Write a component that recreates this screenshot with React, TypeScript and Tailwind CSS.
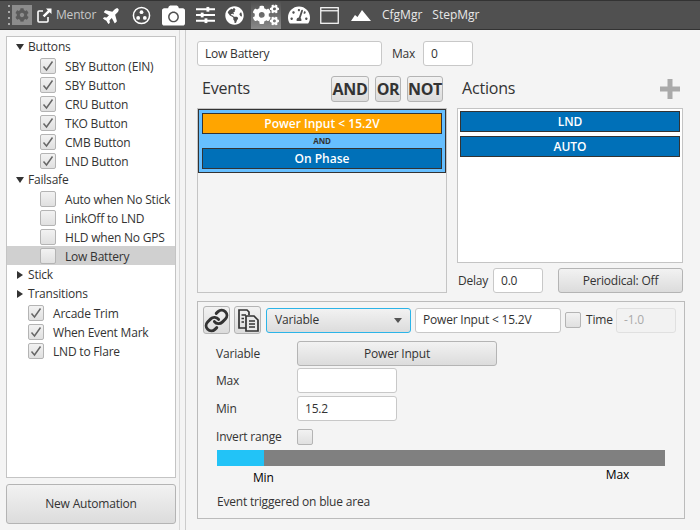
import React from "react";
import { FaCamera, FaCogs, FaGlobeAmericas, FaPlane, FaTachometerAlt, FaCog } from "react-icons/fa";
import { Link } from "lucide-react";

const btn = "border border-[#b4b4b4] rounded-[3px] bg-linear-to-b from-[#f2f2f2] to-[#dcdcdc] text-[#333]";
const input = "border border-[#c8c8c8] rounded-[3px] bg-white flex items-center px-[7px] text-[#333]";

function Check({ on = true }: { on?: boolean }) {
  return (
    <div className="w-[16px] h-[16px] shrink-0 border border-[#b4b4b4] rounded-[2px] bg-linear-to-b from-[#f2f2f2] to-[#e0e0e0] flex items-center justify-center">
      {on && (
        <svg width="12" height="12" viewBox="0 0 12 12">
          <path d="M1.5 6.5 L4.5 10 L10.5 1.5" fill="none" stroke="#666" strokeWidth="1.5" />
        </svg>
      )}
    </div>
  );
}

function Group({ label, open }: { label: string; open: boolean }) {
  return (
    <div className="h-[19px] flex items-center pl-[9px]">
      <svg width="8" height="8" viewBox="0 0 8 8" className="mr-[4px] shrink-0">
        {open ? <path d="M0 1 H8 L4 7 Z" fill="#333" /> : <path d="M1 0 V8 L7 4 Z" fill="#333" />}
      </svg>
      <span>{label}</span>
    </div>
  );
}

function Item({ label, on, deep = true, sel = false }: { label: string; on: boolean; deep?: boolean; sel?: boolean }) {
  return (
    <div className={`h-[19px] flex items-center ${deep ? "pl-[33px]" : "pl-[21px]"} ${sel ? "bg-[#d0d0d0]" : ""}`}>
      <Check on={on} />
      <span className="ml-[9px] pt-[2px] whitespace-nowrap">{label}</span>
    </div>
  );
}

function Toolbar() {
  return (
    <div className="h-[30px] shrink-0 bg-[#505050] border-y border-y-[#333] flex items-center relative text-[12px]">
      <div className="ml-[7px] w-[3px] h-[20px] flex flex-col justify-between items-center">
        {[0, 1, 2, 3].map((i) => (
          <div key={i} className="w-[2px] h-[2px] bg-[#aaa]" />
        ))}
      </div>
      <div className="ml-[2px] w-[20px] h-[20px] bg-[#8c8c8c] flex items-center justify-center">
        <FaCog size={14} color="#5a5a5a" />
      </div>
      <svg width="15" height="15" viewBox="0 0 15 15" className="ml-[5px]">
        <path d="M6 3 H2 a1 1 0 0 0 -1 1 V13 a1 1 0 0 0 1 1 H10 a1 1 0 0 0 1 -1 V9" fill="none" stroke="#fff" strokeWidth="1.6" />
        <path d="M9 0.5 H14.5 V6 L12.6 4.2 L7.5 9.3 L5.7 7.5 L10.8 2.4 Z" fill="#fff" />
      </svg>
      <span className="ml-[4px] text-[#c8c8c8] w-[43px]">Mentor</span>
      <FaPlane size={18} color="#fff" className="ml-[4px] -rotate-45" />
      <svg width="19" height="19" viewBox="0 0 20 20" className="ml-[11px]">
        <circle cx="10" cy="10" r="8.5" fill="none" stroke="#fff" strokeWidth="1.6" />
        <circle cx="10" cy="6.5" r="2" fill="#fff" />
        <circle cx="6.5" cy="12.5" r="2" fill="#fff" />
        <circle cx="13.5" cy="12.5" r="2" fill="#fff" />
      </svg>
      <FaCamera size={23} color="#fff" className="ml-[11px]" />
      <svg width="19" height="18" viewBox="0 0 20 18" className="ml-[11px]">
        <path d="M0 3 H20 M0 9 H20 M0 15 H20" stroke="#fff" strokeWidth="2" />
        <rect x="11" y="0.5" width="3" height="5" fill="#fff" />
        <rect x="5" y="6.5" width="3" height="5" fill="#fff" />
        <rect x="9" y="12.5" width="3" height="5" fill="#fff" />
      </svg>
      <FaGlobeAmericas size={19} color="#fff" className="ml-[10px]" />
      <div className="ml-[7px] w-[30px] h-[28px] bg-linear-to-b from-[#505050] to-[#8a8a8a] flex items-center justify-center">
        <FaCogs size={26} color="#fff" />
      </div>
      <FaTachometerAlt size={22} color="#fff" className="ml-[7px]" />
      <svg width="19" height="17" viewBox="0 0 20 18" className="ml-[10px]">
        <rect x="0.75" y="0.75" width="18.5" height="16.5" fill="none" stroke="#fff" strokeWidth="1.3" />
        <path d="M1 4 H19" stroke="#fff" strokeWidth="1.3" />
      </svg>
      <svg width="20" height="11" viewBox="0 0 20 11" className="ml-[12px]">
        <path d="M0 11 L4 5 L6.5 7 L11 0 L20 11 Z" fill="#fff" />
      </svg>
      <span className="ml-[11px] text-[#e8e8e8] tracking-normal">CfgMgr</span>
      <span className="ml-[10px] text-[#e8e8e8] tracking-normal">StepMgr</span>
    </div>
  );
}

function Sidebar() {
  return (
    <div className="w-[186px] shrink-0 flex flex-col pl-[6px] pr-[9px] pt-[6px] pb-[6px] border-r border-r-[#ccc] relative">
      <div className="absolute right-[5px] top-0 bottom-0 w-px bg-[#d8d8d8]" />
      <div className="flex-1 bg-white border border-[#c4c4c4] overflow-hidden">
        <Group label="Buttons" open />
        <Item label="SBY Button (EIN)" on />
        <Item label="SBY Button" on />
        <Item label="CRU Button" on />
        <Item label="TKO Button" on />
        <Item label="CMB Button" on />
        <Item label="LND Button" on />
        <Group label="Failsafe" open />
        <Item label="Auto when No Stick" on={false} />
        <Item label="LinkOff to LND" on={false} />
        <Item label="HLD when No GPS" on={false} />
        <Item label="Low Battery" on={false} sel />
        <Group label="Stick" open={false} />
        <Group label="Transitions" open={false} />
        <Item label="Arcade Trim" on deep={false} />
        <Item label="When Event Mark" on deep={false} />
        <Item label="LND to Flare" on deep={false} />
      </div>
      <div className={`${btn} h-[40px] mt-[6px] flex items-center justify-center`}>New Automation</div>
    </div>
  );
}

function Bar({ label, bg }: { label: string; bg: string }) {
  return (
    <div className={`h-[21px] border border-[#333] ${bg} flex items-center justify-center text-white font-semibold tracking-normal`}>{label}</div>
  );
}

function Field({ label, children, top = "" }: { label: string; children: React.ReactNode; top?: string }) {
  return (
    <div className={`flex items-center h-[25px] ${top}`}>
      <span className="w-[81px]">{label}</span>
      {children}
    </div>
  );
}

function Logic({ t, w }: { t: string; w: string }) {
  return <div className={`${btn} ${w} h-[26px] flex items-center justify-center text-[16px] font-bold tracking-[-0.3px]`}>{t}</div>;
}

function Main() {
  return (
    <div className="flex-1 min-w-0 pl-[11px] pr-[15px] pt-[11px]">
      <div className="flex items-center h-[25px]">
        <div className={`${input} w-[185px] h-[25px]`}>Low Battery</div>
        <span className="ml-[10px] w-[31px]">Max</span>
        <div className={`${input} w-[50px] h-[25px]`}>0</div>
      </div>
      <div className="flex mt-[10px]">
        <div className="w-[250px] shrink-0">
          <div className="flex items-center h-[26px] pl-[5px]">
            <span className="text-[16px] flex-1 -mt-[2px]">Events</span>
            <Logic t="AND" w="w-[38px]" />
            <Logic t="OR" w="w-[26px] ml-[6px]" />
            <Logic t="NOT" w="w-[36px] ml-[6px] mr-[4px]" />
          </div>
          <div className="mt-[6px] h-[185px] border border-[#c4c4c4] bg-[#f4f4f4]">
            <div className="border border-[#333] bg-[#66bfff] h-[64px] px-[3px] py-[3px] flex flex-col">
              <Bar label="Power Input < 15.2V" bg="bg-[#ffa500]" />
              <div className="h-[14px] flex items-center justify-center text-[8px] font-bold text-[#333]">AND</div>
              <Bar label="On Phase" bg="bg-[#0070b8]" />
            </div>
          </div>
        </div>
        <div className="w-[226px] shrink-0 ml-[10px]">
          <div className="flex items-center justify-between h-[26px] pl-[5px] pr-[3px]">
            <span className="text-[16px] -mt-[2px]">Actions</span>
            <svg width="20" height="20" viewBox="0 0 20 20">
              <path d="M7.5 0 H12.5 V7.5 H20 V12.5 H12.5 V20 H7.5 V12.5 H0 V7.5 H7.5 Z" fill="#aaa" />
            </svg>
          </div>
          <div className="mt-[6px] h-[155px] border border-[#c4c4c4] bg-white px-[2px] pt-[2px] flex flex-col gap-[4px]">
            <Bar label="LND" bg="bg-[#0070b8] border-[#0070b8]" />
            <Bar label="AUTO" bg="bg-[#0070b8] border-[#0070b8]" />
          </div>
          <div className="flex items-center h-[25px] mt-[5px] pl-[1px]">
            <span className="w-[35px]">Delay</span>
            <div className={`${input} w-[50px] h-[25px]`}>0.0</div>
            <div className={`${btn} w-[125px] h-[25px] ml-[15px] flex items-center justify-center`}>Periodical: Off</div>
          </div>
        </div>
      </div>
      <div className="mt-[8px] w-[488px] h-[218px] border border-[#bbb] flex flex-col px-[5px] pt-[4px]">
        <div className="flex items-center h-[28px]">
          <div className={`${btn} w-[27px] h-[28px] flex items-center justify-center`}>
            <Link size={25} color="#333" strokeWidth={2.8} />
          </div>
          <div className={`${btn} w-[27px] h-[28px] ml-[4px] flex items-center justify-center`}>
            <svg width="24" height="24" viewBox="0 0 24 24" fill="none" stroke="#333" strokeWidth="1.7">
              <path d="M10 20 H3 V2 H11 L13 4 V7" />
              <path d="M5.5 7 H10 M5.5 10.5 H8 M5.5 14 H8" />
              <path d="M10 8 H18 L22 12 V23 H10 Z" fill="#e8e8e8" />
              <path d="M13 13 H19 M13 16 H19 M13 19 H19" />
            </svg>
          </div>
          <div className={`${btn} w-[145px] h-[25px] ml-[5px] !border-[#2bb4e8] !border-[1.5px] flex items-center justify-between pl-[8px] pr-[8px]`}>
            <span>Variable</span>
            <svg width="8" height="5" viewBox="0 0 8 5"><path d="M0 0 H8 L4 5 Z" fill="#555" /></svg>
          </div>
          <div className={`${input} w-[146px] h-[25px] ml-[4px]`}>Power Input &lt; 15.2V</div>
          <div className="ml-[4px]"><Check on={false} /></div>
          <span className="ml-[5px] w-[30px]">Time</span>
          <div className={`${input} w-[60px] h-[25px] !bg-[#f2f2f2] !text-[#aaa] !border-[#e0e0e0]`}>-1.0</div>
        </div>
        <div className="pl-[13px] mt-[7px]">
          <Field label="Variable">
            <div className={`${btn} w-[200px] h-[25px] flex items-center justify-center`}>Power Input</div>
          </Field>
          <Field label="Max" top="mt-[2px]">
            <div className={`${input} w-[100px] h-[25px]`} />
          </Field>
          <Field label="Min" top="mt-[3px]">
            <div className={`${input} w-[100px] h-[25px]`}>15.2</div>
          </Field>
          <div className="flex items-center h-[16px] mt-[8px]">
            <span className="w-[81px]">Invert range</span>
            <Check on={false} />
          </div>
          <div className="mt-[5px] w-[448px] h-[16px] bg-[#808080] ml-[1px]">
            <div className="w-[47px] h-full bg-[#22c3f7]" />
          </div>
          <div className="flex justify-between ml-[1px] w-[448px] h-[22px] text-black">
            <span className="ml-[36px] mt-[3px]">Min</span>
            <span className="mr-[36px]">Max</span>
          </div>
          <div className="mt-[5px] ml-[1px]">Event triggered on blue area</div>
        </div>
      </div>
    </div>
  );
}

export default function App() {
  return (
    <div className="w-[700px] h-[530px] flex flex-col bg-[#f4f4f4] text-[12px] tracking-[-0.2px] text-[#333] overflow-hidden font-['Open_Sans','Noto_Sans',sans-serif]">
      <Toolbar />
      <div className="flex flex-1 min-h-0">
        <Sidebar />
        <Main />
      </div>
    </div>
  );
}
